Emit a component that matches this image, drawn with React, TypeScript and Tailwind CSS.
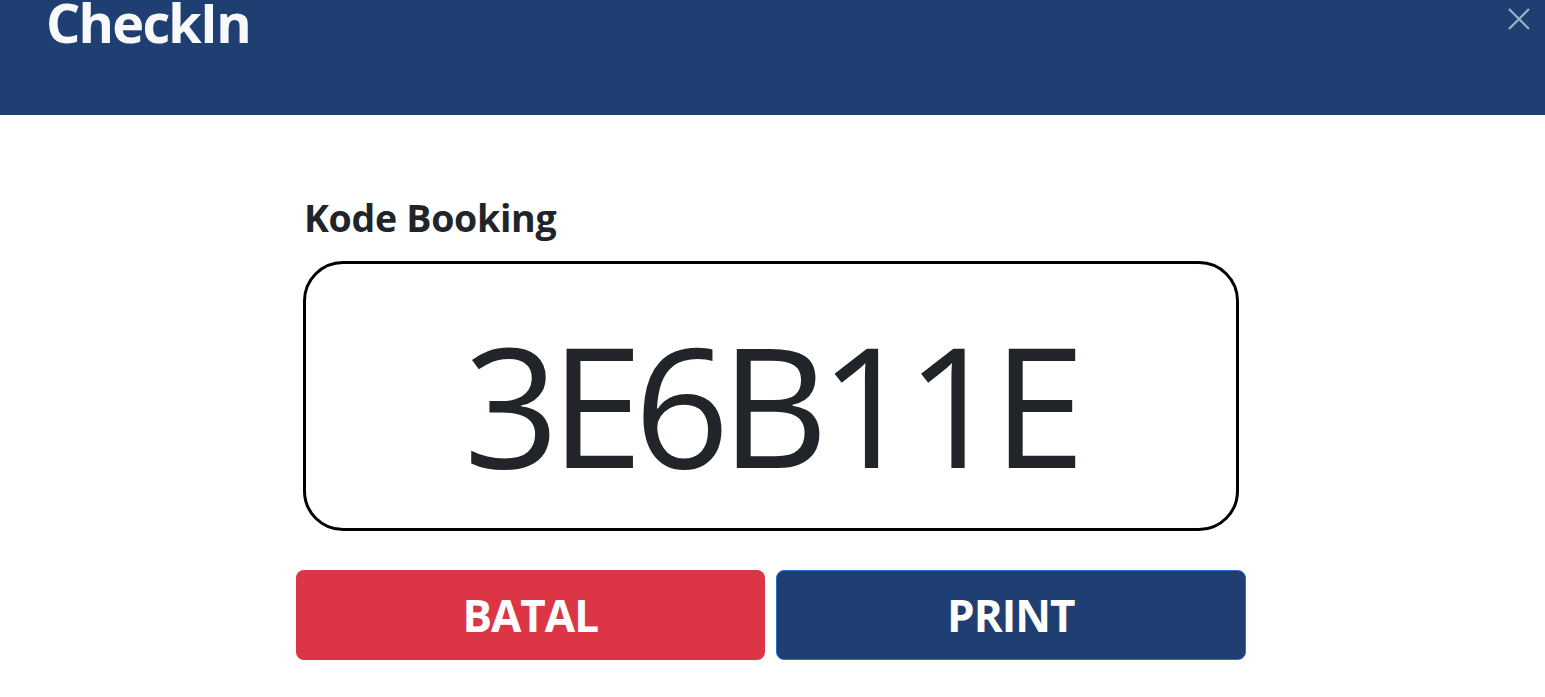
import React from 'react';

const App = () => {
  return (
    <div className="min-h-[697px] bg-white font-['Open_Sans','Noto_Sans',sans-serif] text-[#212529]">
      {/* Header */}
      <div className="relative h-[115px] bg-[#1f3f73] overflow-hidden">
        <h1 className="ml-[46px] mt-[-5px] text-[54px] leading-none font-bold text-[#f8f9fa] tracking-[-1.8px]">
          CheckIn
        </h1>
        <button className="absolute right-[14px] top-[7px] w-[24px] h-[24px] text-[#9fb0c8]">
          <svg viewBox="0 0 24 24" className="w-full h-full" fill="none" stroke="currentColor" strokeWidth="2.2">
            <path d="M2 2 L22 22 M22 2 L2 22" />
          </svg>
        </button>
      </div>

      {/* Body */}
      <div className="flex justify-center pt-[84px] pr-[3px]">
        <div className="w-[950px] flex flex-col">
          <label className="ml-[8px] text-[37.5px] leading-none font-bold tracking-[-0.3px]">Kode Booking</label>
          <div className="mx-[7px] mt-[24px] h-[270px] border-[3px] border-black rounded-[40px] flex items-center justify-center">
            <span className="text-[167px] leading-none font-normal tracking-[-9px] mt-[16px] ml-[-2px]">3E6B11E</span>
          </div>
          <div className="mt-[39px] flex gap-[11px]">
            <button className="flex-1 h-[90px] rounded-[8px] bg-[#dc3545] text-white text-[44px] font-bold tracking-[-1px]">
              BATAL
            </button>
            <button className="flex-1 h-[90px] rounded-[8px] bg-[#1f3f73] border border-[#2a6fd6] text-white text-[44px] font-bold tracking-[-1px]">
              PRINT
            </button>
          </div>
        </div>
      </div>
    </div>
  );
};

export default App;
